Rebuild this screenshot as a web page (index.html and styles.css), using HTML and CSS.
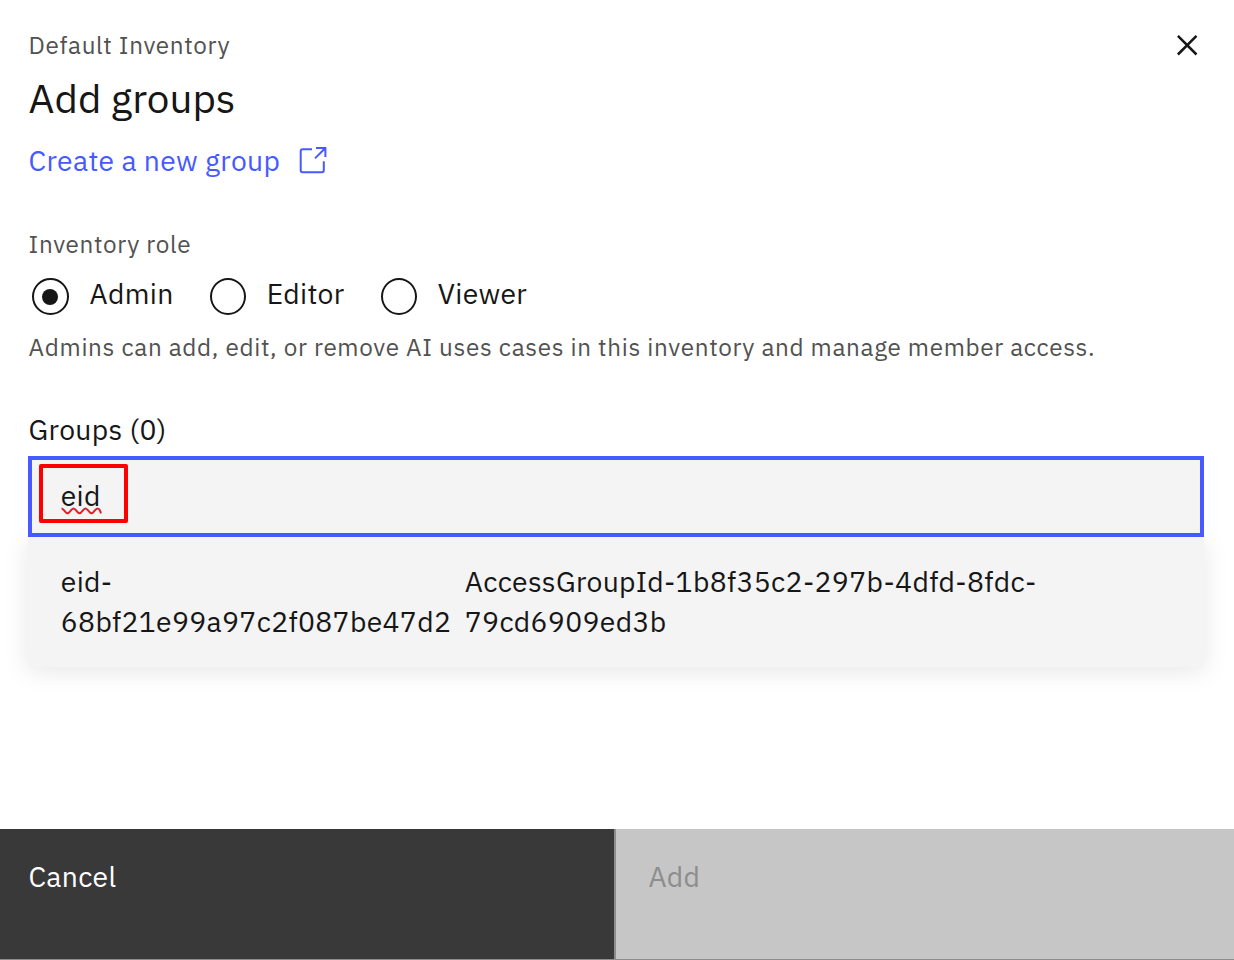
FILE: index.html
```html
<!DOCTYPE html>
<html lang="en">
<head>
<meta charset="utf-8">
<title>Add groups</title>
<link rel="stylesheet" href="styles.css">
</head>
<body>
<main class="panel">
  <header class="header">
    <div>
      <div class="label">Default Inventory</div>
      <h1 class="title">Add groups</h1>
      <a class="link"><span>Create a new group</span>
        <svg class="launch" width="30" height="30" viewBox="0 0 30 30" fill="none" stroke="currentColor" stroke-width="2">
          <path d="M14 4.3H4.6Q2.7 4.3 2.7 6.2V25.2Q2.7 27.2 4.6 27.2H24Q25.8 27.2 25.8 25.2V16.2M18 3H27.4V12M27.4 3L17 13.4"/>
        </svg>
      </a>
    </div>
    <button class="close" aria-label="Close">
      <svg width="22" height="22" viewBox="0 0 22 22" stroke="#161616" stroke-width="2.5"><path d="M1.9 1.9L20.5 20.5M20.5 1.9L1.9 20.5"/></svg>
    </button>
  </header>
  <section class="roles">
    <div class="label">Inventory role</div>
    <div class="options">
      <label class="option admin"><span class="radio checked"></span><span class="name">Admin</span></label>
      <label class="option editor"><span class="radio narrow"></span><span class="name">Editor</span></label>
      <label class="option"><span class="radio narrow"></span><span class="name">Viewer</span></label>
    </div>
    <div class="label help">Admins can add, edit, or remove AI uses cases in this inventory and manage member access.</div>
  </section>
  <section class="groups">
    <div class="groups-label">Groups (0)</div>
    <div class="field">
      <span class="query">eid<svg class="squiggle" width="41" height="8" viewBox="0 0 41 8" fill="none" stroke="#e0202a" stroke-width="2"><path d="M0.5 1.5C3 1.5 4 6.3 6.5 6.3S10 1.5 12.5 1.5S16 6.3 18.5 6.3S22 1.5 24.5 1.5S28 6.3 30.5 6.3S34 1.5 36.5 1.5S39 4 40 6.3"/></svg></span>
      <span class="marker"></span>
    </div>
    <div class="menu">
      <div>eid-<br>68bf21e99a97c2f087be47d2</div>
      <div>AccessGroupId-1b8f35c2-297b-4dfd-8fdc-<br>79cd6909ed3b</div>
    </div>
  </section>
  <footer class="footer">
    <button class="btn cancel">Cancel</button>
    <button class="btn add" disabled>Add</button>
  </footer>
</main>
</body>
</html>
```
FILE: styles.css
```css
* { box-sizing: border-box; }
body { margin: 0; }
.panel {
  display: flex;
  flex-direction: column;
  height: 960px;
  overflow: hidden;
  background: #fff;
  color: #161616;
  font: 400 28.3px/40px "IBM Plex Sans", "Open Sans", sans-serif;
  letter-spacing: 0.33px;
}
.header {
  display: flex;
  justify-content: space-between;
  padding: 29px 36px 0 28.6px;
}
.label {
  color: #525252;
  font-size: 24.27px;
  line-height: 32px;
  letter-spacing: 0.66px;
}
.title {
  margin: 11px 0 17px;
  font-size: 40.4px;
  font-weight: 400;
  line-height: 52px;
  letter-spacing: 0;
}
.link {
  display: flex;
  gap: 18px;
  color: #465aff;
}
.launch { margin-top: 4px; }
.close {
  align-self: flex-start;
  margin-top: 5px;
  padding: 0;
  border: 0;
  background: none;
}
.close svg { display: block; }
.roles { padding: 47px 28px 0 28.6px; }
.options {
  display: flex;
  height: 47px;
  margin: 13px 0 11px 3.4px;
}
.option { display: flex; align-items: center; }
.radio {
  display: grid;
  place-items: center;
  width: 37px;
  height: 37px;
  border: 2px solid #161616;
  border-radius: 50%;
}
.narrow { width: 36px; margin-right: 0.8px; }
.checked::after {
  content: "";
  width: 16px;
  height: 16px;
  border-radius: 50%;
  background: #161616;
}
.name { padding: 0 0 5px 20px; }
.admin { width: 178px; }
.editor { width: 171px; }
.admin .name { padding-left: 20.6px; }
.help { white-space: nowrap; }
.groups { padding: 47px 30px 0 28px; }
.groups-label { padding-left: 0.6px; }
.field {
  position: relative;
  z-index: 1;
  height: 81px;
  margin-top: 6px;
  padding: 16px 28.7px;
  border: 4px solid #465aff;
  background: #f4f4f4;
}
.query { position: relative; }
.squiggle { position: absolute; left: 0; top: 30px; }
.marker {
  position: absolute;
  left: 7px;
  top: 4px;
  width: 89px;
  height: 59px;
  border: 4px solid #f00;
  border-radius: 2px;
}
.menu {
  display: grid;
  grid-template-columns: 404px 1fr;
  height: 130px;
  padding: 25px 0 0 32.8px;
  background: #f4f4f4;
  box-shadow: 0 4px 24px rgba(0, 0, 0, 0.1);
}
.footer {
  display: grid;
  grid-template-columns: 614px 1fr;
  height: 131px;
  margin-top: auto;
  border-bottom: 1px solid #8d8d8d;
}
.btn {
  display: flex;
  align-items: flex-start;
  padding: 28px 28px 0;
  border: 0;
  font: inherit;
  letter-spacing: inherit;
}
.cancel { padding-left: 28.4px; background: #393939; color: #fff; }
.add {
  padding-left: 32.4px;
  border-left: 2px solid #8d8d8d;
  background: #c6c6c6;
  color: #8d8d8d;
}
```
